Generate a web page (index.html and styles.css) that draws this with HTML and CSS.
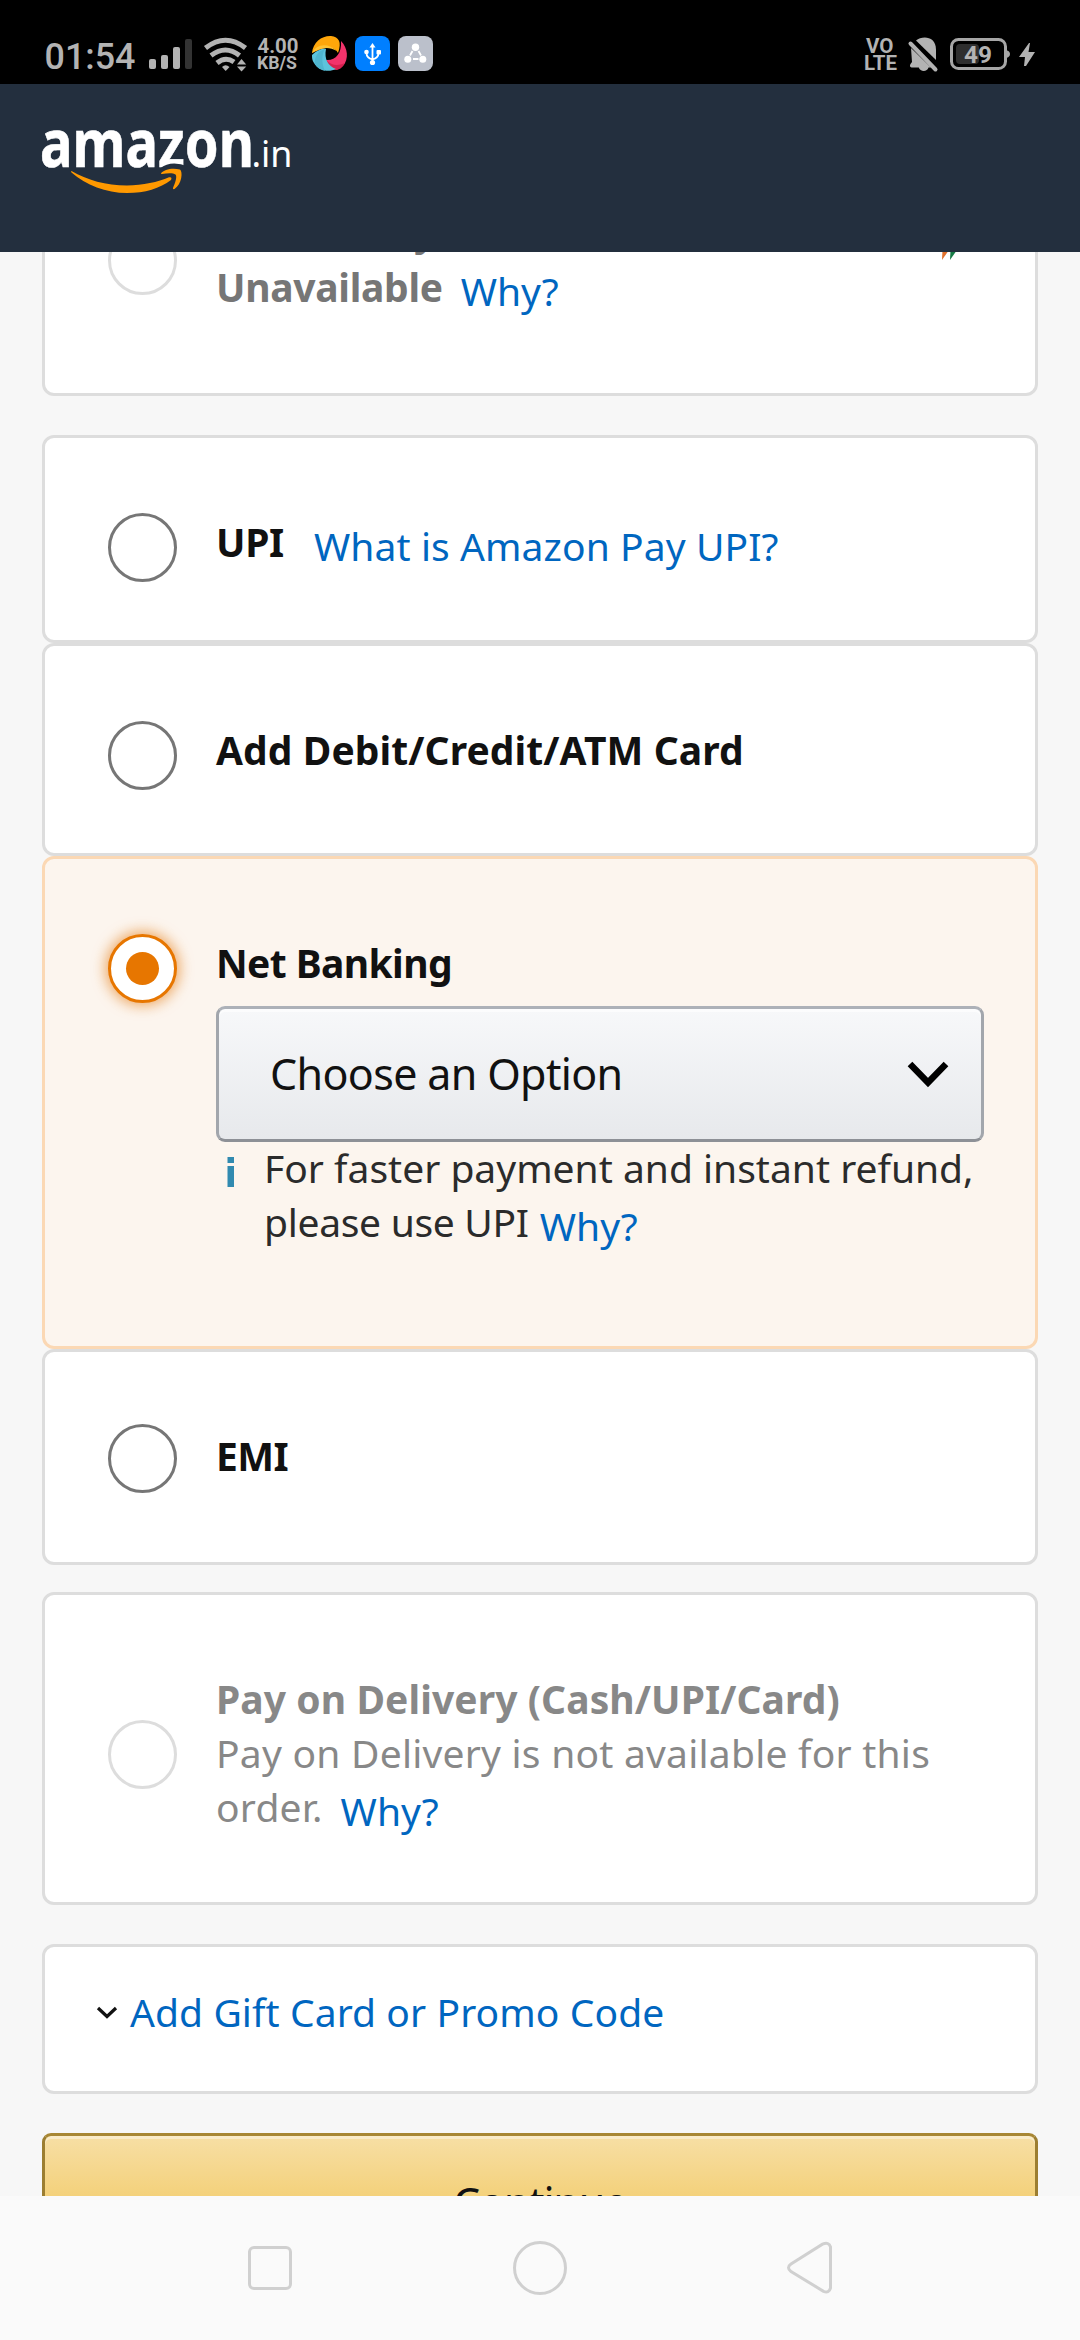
FILE: index.html
```html
<!DOCTYPE html>
<html lang="en">
<head>
<meta charset="utf-8">
<title>Select a payment method</title>
<link rel="stylesheet" href="styles.css">
</head>
<body>
<div class="screen">
  <div class="statusbar">
    <svg class="statusbar-art" width="1080" height="84" viewBox="0 0 1080 84" aria-hidden="true">
      <g fill="#b3b3b3">
        <rect x="149" y="59" width="7" height="10" rx="2"/>
        <rect x="161" y="55" width="7" height="14" rx="2"/>
        <rect x="173" y="47" width="7" height="22" rx="2"/>
        <rect x="185" y="39" width="7" height="30" rx="2" fill="#333"/>
      </g>
      <g fill="none" stroke="#b3b3b3" stroke-width="5">
        <path d="M205.500 48Q225.500 32.500 245.500 48"/>
        <path d="M211 55.500Q225.500 44.500 239.500 55.500"/>
        <path d="M217 63Q225.500 56 234 62"/>
      </g>
      <g fill="#b3b3b3">
        <path d="M222 67Q225.500 63.500 229.500 67L225.700 71Z"/>
        <path d="M237 64.500L241.500 59L246.200 64.500Z"/>
        <path d="M237 66.500L241.500 71.500L246.200 66.500Z"/>
      </g>
      <!-- pinwheel app -->
      <path d="M312 53C313 42 322 35.500 331 36C339 37 342 42 338 53C335 47 328 45 312 53Z" fill="#ffa60a"/>
      <path d="M312 53C316 44 328 42 337 51C328 45.500 319 48 312 53Z" fill="#ffc233"/>
      <path d="M341 41C348 48 349 59 343 66C336 71 328 67 326 60C335 61 342 54 341 41Z" fill="#f2336b"/>
      <path d="M326 60C332 66 338 66 345 63C342 68 339 70 336 70C331 69 327 66 326 60Z" fill="#d6214f"/>
      <path d="M312 55C318 49 324 48 326 49C324 59 328 66 336 69C328 73 318 70 314 63C312 60 312 58 312 55Z" fill="#5cc3dc"/>
      <path d="M315 64C314 57 318 51 325 49C322 54 321 62 325 71C321 70 317 68 315 64Z" fill="#4fb5cf"/>
      <!-- usb -->
      <rect x="355" y="36" width="35" height="35" rx="8" fill="#007fff"/>
      <g stroke="#fff" fill="none" stroke-width="1.800">
        <path d="M372.500 46V63M366.500 53C366.500 57 369 58.500 372.500 59.500C376 58.500 378.500 57 378.500 53"/>
      </g>
      <g fill="#fff"><path d="M369.500 47.500L372.500 43L375.500 47.500Z"/><circle cx="372.500" cy="62.500" r="2.600"/><circle cx="366.500" cy="52" r="2.300"/><rect x="376.500" y="50" width="4.500" height="4.500" rx="1"/></g>
      <!-- share -->
      <rect x="398" y="36" width="35" height="35" rx="8" fill="#bbc0cb"/>
      <g stroke="#fff" stroke-width="1.800"><path d="M412.500 51L410 55.500M418.500 51L421 55.500M413 59H418.500"/></g>
      <g fill="#fff"><circle cx="415.500" cy="47.300" r="3.700"/><circle cx="407.800" cy="59.300" r="3.500"/><circle cx="422.800" cy="59.300" r="3.500"/></g>
      <!-- muted bell -->
      <g fill="#b3b3b3">
        <path d="M911 48L931 67.500H928.500C927.500 72 920 72 918.800 67.500H911.500Q909 66.500 910.500 64L912 62Z"/>
        <path d="M916 40.500C922 35.500 936 35.500 936 50V60Z"/>
        <path d="M910.500 43.500L935.500 69.500" stroke="#b3b3b3" stroke-width="4" stroke-linecap="round"/>
      </g>
      <!-- battery -->
      <rect x="951.500" y="39.500" width="54" height="29" rx="7" fill="none" stroke="#a6a6a6" stroke-width="3"/>
      <path d="M1006 50Q1010 51 1010 54Q1010 57 1006 58Z" fill="#a6a6a6"/>
      <rect x="956" y="44" width="23" height="20" rx="4" fill="#2e2e2e"/>
      <path d="M1029 43L1019 57H1025L1024 66H1026L1035 52H1028.500L1030 43Z" fill="#b3b3b3"/>
      <g class="status-text">
        <text x="44.500" y="69" font-size="37.500" font-weight="500" textLength="91" lengthAdjust="spacingAndGlyphs">01:54</text>
        <text x="257.500" y="53" font-size="21" textLength="41" lengthAdjust="spacingAndGlyphs">4.00</text>
        <text x="257" y="69" font-size="18.500" textLength="40" lengthAdjust="spacingAndGlyphs">KB/S</text>
        <text x="866" y="52.500" font-size="20.500" textLength="27.500" lengthAdjust="spacingAndGlyphs">VO</text>
        <text x="864" y="70" font-size="20.500" textLength="33" lengthAdjust="spacingAndGlyphs">LTE</text>
        <text x="964" y="63" font-size="24" textLength="28" lengthAdjust="spacingAndGlyphs">49</text>
      </g>
    </svg>
  </div>

  <header class="header">
    <svg width="300" height="168" viewBox="0 84 300 168" role="img" aria-label="amazon.in">
      <text class="logo-word" x="40" y="167" textLength="214" lengthAdjust="spacingAndGlyphs">amazon</text>
      <text class="logo-tld" x="251.500" y="167" textLength="41" lengthAdjust="spacingAndGlyphs">.in</text>
      <path d="M160 168.500Q171 159.500 188 166.500V171L160 171Z" fill="#232f3e"/>
      <g fill="#ff9900">
        <path d="M71.500 171C87 180 106 185.500 127 185.500C143 185.500 158 182 169 177.300Q172.500 176.500 171 180C160 188.500 145 193 127 193C106 193 86 185 71.500 172.500Q70.500 171 71.500 171Z"/>
        <path d="M161 173.300C164 169.500 172 167.500 180 169.500C183 171.500 182 184 174.500 189Q172.500 189.500 173 188C175 183 177.500 177 175.500 174.500C173 172.500 167 173 162 174Q160.500 174 161 173.300Z"/>
      </g>
    </svg>
  </header>

  <main class="content">
    <section class="card card-top">
      <span class="radio radio-off"></span>
      <div class="body muted">
        <div class="line line-first"><b>is currently</b></div>
        <div class="line"><b class="snug">Unavailable</b><a class="link gap-m">Why?</a></div>
      </div>
      <svg class="upi-mark" width="40" height="80" viewBox="0 0 40 80" aria-hidden="true"><path d="M10 20L32 44L7 80Z" fill="#e0702c"/><path d="M18 20L40 44L15 80Z" fill="#147a44"/></svg>
    </section>

    <section class="card card-upi">
      <span class="radio"></span>
      <div class="body"><div class="line"><b class="snug">UPI</b><a class="link gap-l loose">What is Amazon Pay UPI?</a></div></div>
    </section>

    <section class="card card-add">
      <span class="radio"></span>
      <div class="body"><div class="line"><b class="loose">Add Debit/Credit/ATM Card</b></div></div>
    </section>

    <section class="card card-net selected">
      <span class="radio radio-on"></span>
      <div class="body">
        <div class="line"><b class="tight">Net Banking</b></div>
        <div class="select"><span>Choose an Option</span>
          <svg width="44" height="30" viewBox="0 0 44 30" aria-hidden="true"><path d="M4 5L22 23.500L40 5" fill="none" stroke="#000" stroke-width="6.500"/></svg>
        </div>
        <div class="notice">
          <svg class="info" width="8" height="32" viewBox="0 0 8 32" aria-hidden="true"><path d="M.5 1H7V7H.5ZM.5 10H7V31H.5Z" fill="#318ab0"/></svg>
          <div>
            <div class="line">For faster payment and instant refund,</div>
            <div class="line"><span class="snug">please use UPI</span><a class="link gap-s">Why?</a></div>
          </div>
        </div>
      </div>
    </section>

    <section class="card card-emi">
      <span class="radio"></span>
      <div class="body"><div class="line"><b class="tight">EMI</b></div></div>
    </section>

    <section class="card card-pod">
      <span class="radio radio-off"></span>
      <div class="body faded">
        <div class="line"><b class="loose">Pay on Delivery (Cash/UPI/Card)</b></div>
        <div class="line"><span class="looser">Pay on Delivery is not available for this</span></div>
        <div class="line"><span class="looser">order.</span><a class="link gap-m">Why?</a></div>
      </div>
    </section>

    <section class="card card-gift">
      <svg width="22" height="14" viewBox="0 0 22 14" aria-hidden="true"><path d="M2 2L11 10.500L20 2" fill="none" stroke="#111" stroke-width="3.200"/></svg>
      <a class="gift-link loose">Add Gift Card or Promo Code</a>
    </section>

    <div class="continue">Continue</div>
  </main>

  <nav class="navbar">
    <svg width="1080" height="144" viewBox="0 2196 1080 144" fill="none" stroke="#d0d0d0" stroke-width="3" aria-hidden="true">
      <rect x="249.500" y="2247.500" width="41" height="41" rx="4.500"/>
      <circle cx="540" cy="2268" r="25.500"/>
      <path d="M822.500 2244.200Q829 2241.500 830.500 2247V2288Q829 2293.500 823.500 2291.300L791 2271.500Q786 2267.500 791 2264Z"/>
    </svg>
  </nav>
</div>
</body>
</html>
```
FILE: styles.css
```css
* { box-sizing: border-box; }
body { margin: 0; background: #f7f7f7; color: #111; font-family: "Noto Sans", sans-serif; }
svg { display: block; flex: none; }
.screen { width: 1080px; height: 2340px; overflow: hidden; display: flex; flex-direction: column; }
.statusbar { height: 84px; background: #000; }
.status-text { font-family: Roboto, sans-serif; font-weight: 700; fill: #b3b3b3; }
.header { height: 168px; background: #232f3e; }
.logo-word { font: 700 66px "Noto Sans", sans-serif; fill: #fff; stroke: #fff; stroke-width: .6; }
.logo-tld { font: 400 36.5px "Noto Sans", sans-serif; fill: #fff; }
.content { height: 1944px; padding: 0 42px; overflow: hidden; background: #f7f7f7; }
.card { display: flex; border: 3px solid #ddd; border-radius: 12px; background: #fff; padding: 75px 48px 0 63px; }
.card-top { height: 270px; margin-top: -126px; }
.card-upi { height: 208px; margin-top: 39px; }
.card-add { height: 213px; }
.card-net { height: 493px; }
.card-emi { height: 216px; }
.card-pod { height: 313px; margin-top: 27px; }
.card-gift { height: 150px; margin-top: 39px; padding: 38px 0 0 51px; }
.selected { background: #fcf5ee; border-color: #fbd8b4; }
.radio { flex: none; width: 69px; height: 69px; border: 3px solid #767676; border-radius: 50%; background: #fff; margin-right: 39px; }
.radio-off { border-color: #ddd; }
.card-top .radio { margin-top: 22px; }
.card-pod .radio { margin-top: 50px; }
.card-emi .radio { margin-top: -3px; }
.radio-on { border-color: #e77600; box-shadow: 0 0 13px 3px rgba(228, 121, 17, .6); display: flex; align-items: center; justify-content: center; }
.radio-on::after { content: ""; width: 33px; height: 33px; border-radius: 50%; background: #e77600; }
.body { flex: 1; padding-top: 2px; font-size: 39px; }
.line { height: 54px; line-height: 54px; white-space: nowrap; }
.line-first { margin: -2px 0 2px; }
.line b, .line span, .line a { display: inline-block; }
.tight { letter-spacing: -.6px; }
.snug { letter-spacing: -.3px; }
.loose { letter-spacing: .09px; }
.looser { letter-spacing: .23px; }
.link { color: #0066c0; line-height: 54px; height: 54px; vertical-align: -4px; }
.gap-s { margin-left: 11px; }
.gap-m { margin-left: 18px; }
.gap-l { margin-left: 30px; }
.muted { color: #767676; }
.faded { color: #888; }
.upi-mark { margin: -24px 12px 0 -12px; }
.select { width: 768px; height: 136px; margin-top: 16px; padding: 0 31px 0 51px; display: flex; align-items: center; justify-content: space-between; border: 3px solid; border-color: #adb1b8 #a2a6ac #8d9096; border-radius: 9px; background: linear-gradient(#f7f8fa, #e7e9ec); box-shadow: inset 0 3px 0 rgba(255, 255, 255, .6); font-size: 43px; line-height: 60px; letter-spacing: -.65px; }
.notice { display: flex; margin-top: -1px; color: #2b2b2b; }
.info { margin: 15px 29px 0 11px; }
.gift-link { color: #0066c0; font-size: 39px; line-height: 54px; height: 54px; white-space: nowrap; margin-left: 12px; }
.card-gift svg { margin-top: 21px; }
.continue { height: 135px; margin-top: 39px; border: 3px solid; border-color: #a88734 #9c7e31 #846a29; border-radius: 9px; background: linear-gradient(#f7dfa5, #f0c14b); box-shadow: inset 0 3px 0 rgba(255, 255, 255, .4); text-align: center; font-size: 43px; line-height: 133px; letter-spacing: -1.2px; }
.navbar { height: 144px; background: #fafafa; }
```
